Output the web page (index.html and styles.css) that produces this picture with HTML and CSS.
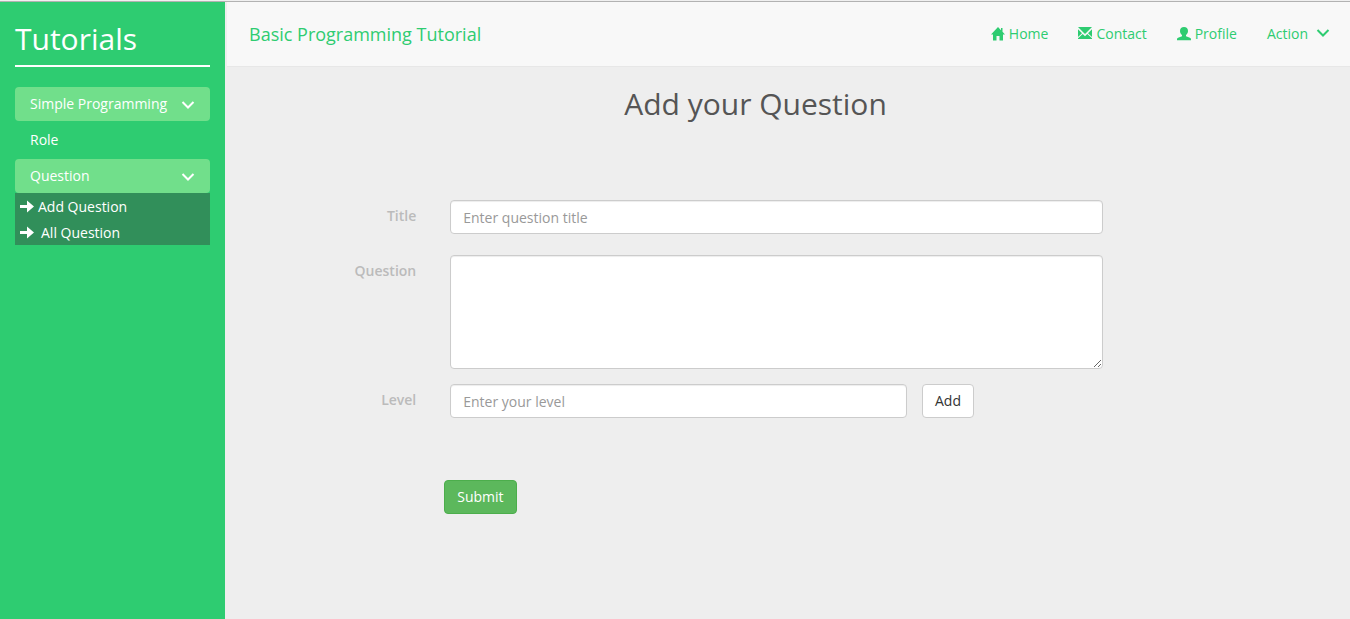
FILE: index.html
```html
<!DOCTYPE html>
<html lang="en">
<head>
<meta charset="utf-8">
<title>Basic Programming Tutorial</title>
<link rel="stylesheet" href="styles.css">
</head>
<body>
<div class="layout">
  <aside class="sidebar">
    <h2 class="brand">Tutorials</h2>
    <nav class="menu">
      <button class="menu-toggle" type="button">Simple Programming
        <svg class="chevron" width="14" height="14" viewBox="0 0 14 14"><path d="M1.500 4 7 9.500 12.500 4"/></svg>
      </button>
      <a class="menu-link" href="#">Role</a>
      <button class="menu-toggle" type="button">Question
        <svg class="chevron" width="14" height="14" viewBox="0 0 14 14"><path d="M1.500 4 7 9.500 12.500 4"/></svg>
      </button>
      <div class="submenu">
        <a class="submenu-link" href="#"><svg class="icon" width="14" height="14" viewBox="0 0 14 14"><path d="M0 5h7V.500l7 6-7 6V8H0z"/></svg>Add Question</a>
        <a class="submenu-link wide" href="#"><svg class="icon" width="14" height="14" viewBox="0 0 14 14"><path d="M0 5h7V.500l7 6-7 6V8H0z"/></svg>All Question</a>
      </div>
    </nav>
  </aside>
  <div class="content">
    <header class="navbar">
      <a class="navbar-title" href="#">Basic Programming Tutorial</a>
      <nav class="navbar-links">
        <a class="nav-link" href="#"><svg class="icon" width="14" height="14" viewBox="0 0 14 14"><path d="M7 0 0 7.500h2V13.500h3.500v-4.500h3v4.500H12V7.500h2L11.500 4.800V1H10v2.200z"/></svg>Home</a>
        <a class="nav-link" href="#"><svg class="icon" width="14" height="14" viewBox="0 0 14 14"><path d="M0 0h14L7 7zM0 2.200 4 6.200 0 10zM14 2.200 10 6.200 14 10zM0 12v-.700l4.700-4.400L7 9.200l2.300-2.300 4.700 4.400V12z"/></svg>Contact</a>
        <a class="nav-link" href="#"><svg class="icon" width="14" height="14" viewBox="0 0 14 14"><path d="M7 0c2.500 0 4 1.300 4 4 0 1.700-.800 3.100-2 4.100v1.100c1.500.600 4 1.200 4.700 2 .300.400.300 1.100.300 2.100H0c0-1 0-1.700.300-2.100.700-.800 3.200-1.400 4.700-2V8.100C3.800 7.100 3 5.700 3 4c0-2.700 1.500-4 4-4z"/></svg>Profile</a>
        <button class="nav-link nav-action" type="button">Action<svg class="chevron" width="14" height="14" viewBox="0 0 14 14"><path d="M1.500 3 7 8.500 12.500 3"/></svg></button>
      </nav>
    </header>
    <main>
      <h1 class="page-title">Add your Question</h1>
      <form class="question-form">
        <label class="field-label" for="title">Title</label>
        <input class="control title-control" id="title" type="text" placeholder="Enter question title">
        <label class="field-label" for="question">Question</label>
        <textarea class="control question-control" id="question"></textarea>
        <label class="field-label" for="level">Level</label>
        <div class="level-row">
          <input class="control level-control" id="level" type="text" placeholder="Enter your level">
          <button class="btn" type="button">Add</button>
        </div>
        <div class="actions"><button class="btn btn-submit" type="submit">Submit</button></div>
      </form>
    </main>
  </div>
</div>
</body>
</html>
```
FILE: styles.css
```css
* { box-sizing: border-box; }

body {
  margin: 0;
  background: #eee;
  color: #555;
  font: 14px/20px "Open Sans", sans-serif;
}

a { text-decoration: none; }

button, input, textarea { font: inherit; }

.layout {
  display: grid;
  grid-template-columns: 225px 1fr;
  grid-template-rows: 1px 1fr;
  min-height: 100vh;
  border-top: 1px solid #f0f0f0;
}

.layout::before {
  content: "";
  grid-column: 1 / -1;
  background: #b2b2b2;
}

.sidebar {
  padding: 17px 15px;
  background: #2ecc71;
  color: #fff;
}

.brand {
  margin: 0 0 20px;
  padding-bottom: 6px;
  border-bottom: 2px solid #fff;
  font-size: 30px;
  font-weight: 400;
  line-height: 40px;
}

.menu { display: flex; flex-direction: column; }

.menu-toggle, .menu-link {
  display: flex;
  align-items: center;
  justify-content: space-between;
  height: 34px;
  padding: 0 15px;
  color: #fff;
}

.menu-toggle {
  border: 0;
  border-radius: 4px;
  background: #71df8b;
}

.menu-link { margin: 2px 0; }

.chevron {
  flex: none;
  fill: none;
  stroke: currentColor;
  stroke-width: 2;
}

.menu-toggle .chevron { margin-top: 2px; }

.icon { flex: none; fill: currentColor; }

.submenu { background: #318f5a; }

.submenu-link {
  display: flex;
  align-items: center;
  gap: 4px;
  height: 26px;
  padding: 2px 5px 0;
  color: #fff;
}

.submenu-link.wide { gap: 7px; }

.navbar {
  display: flex;
  align-items: center;
  justify-content: space-between;
  height: 65px;
  margin-left: 2px;
  padding: 0 20px 0 22px;
  border-bottom: 1px solid #e7e7e7;
  background: #f8f8f8;
}

.navbar-title { color: #2ecc71; font-size: 18px; }

.navbar-links { display: flex; gap: 30px; }

.nav-link {
  display: flex;
  align-items: center;
  gap: 4px;
  padding: 0;
  border: 0;
  background: none;
  color: #2ecc71;
}

.nav-action { gap: 8px; }

.page-title {
  margin: 19px 64px 79px 0;
  font-size: 30px;
  font-weight: 400;
  line-height: 35px;
  text-align: center;
}

.question-form {
  display: grid;
  grid-template-columns: 17% 58%;
  column-gap: 34px;
  align-items: start;
}

.field-label {
  padding-top: 6px;
  color: #bbb;
  font-weight: 600;
  text-align: right;
}

.control {
  width: 100%;
  height: 34px;
  padding: 6px 12px;
  border: 1px solid #ccc;
  border-radius: 4px;
  background: #fff;
  box-shadow: inset 0 1px 1px rgba(0, 0, 0, 0.075);
  color: #555;
}

.control::placeholder { color: #999; }

.title-control { margin-bottom: 21px; }

.question-control {
  display: block;
  height: 114px;
  margin-bottom: 15px;
  resize: vertical;
}

.level-row { display: flex; gap: 15px; }

.level-control { width: 70%; }

.btn {
  height: 34px;
  padding: 0 12px;
  border: 1px solid #ccc;
  border-radius: 4px;
  background: #fff;
  color: #333;
}

.actions { grid-column: 2; margin: 62px 0 0 -6px; }

.btn-submit {
  border-color: #4cae4c;
  background: #5cb85c;
  color: #fff;
}
```
